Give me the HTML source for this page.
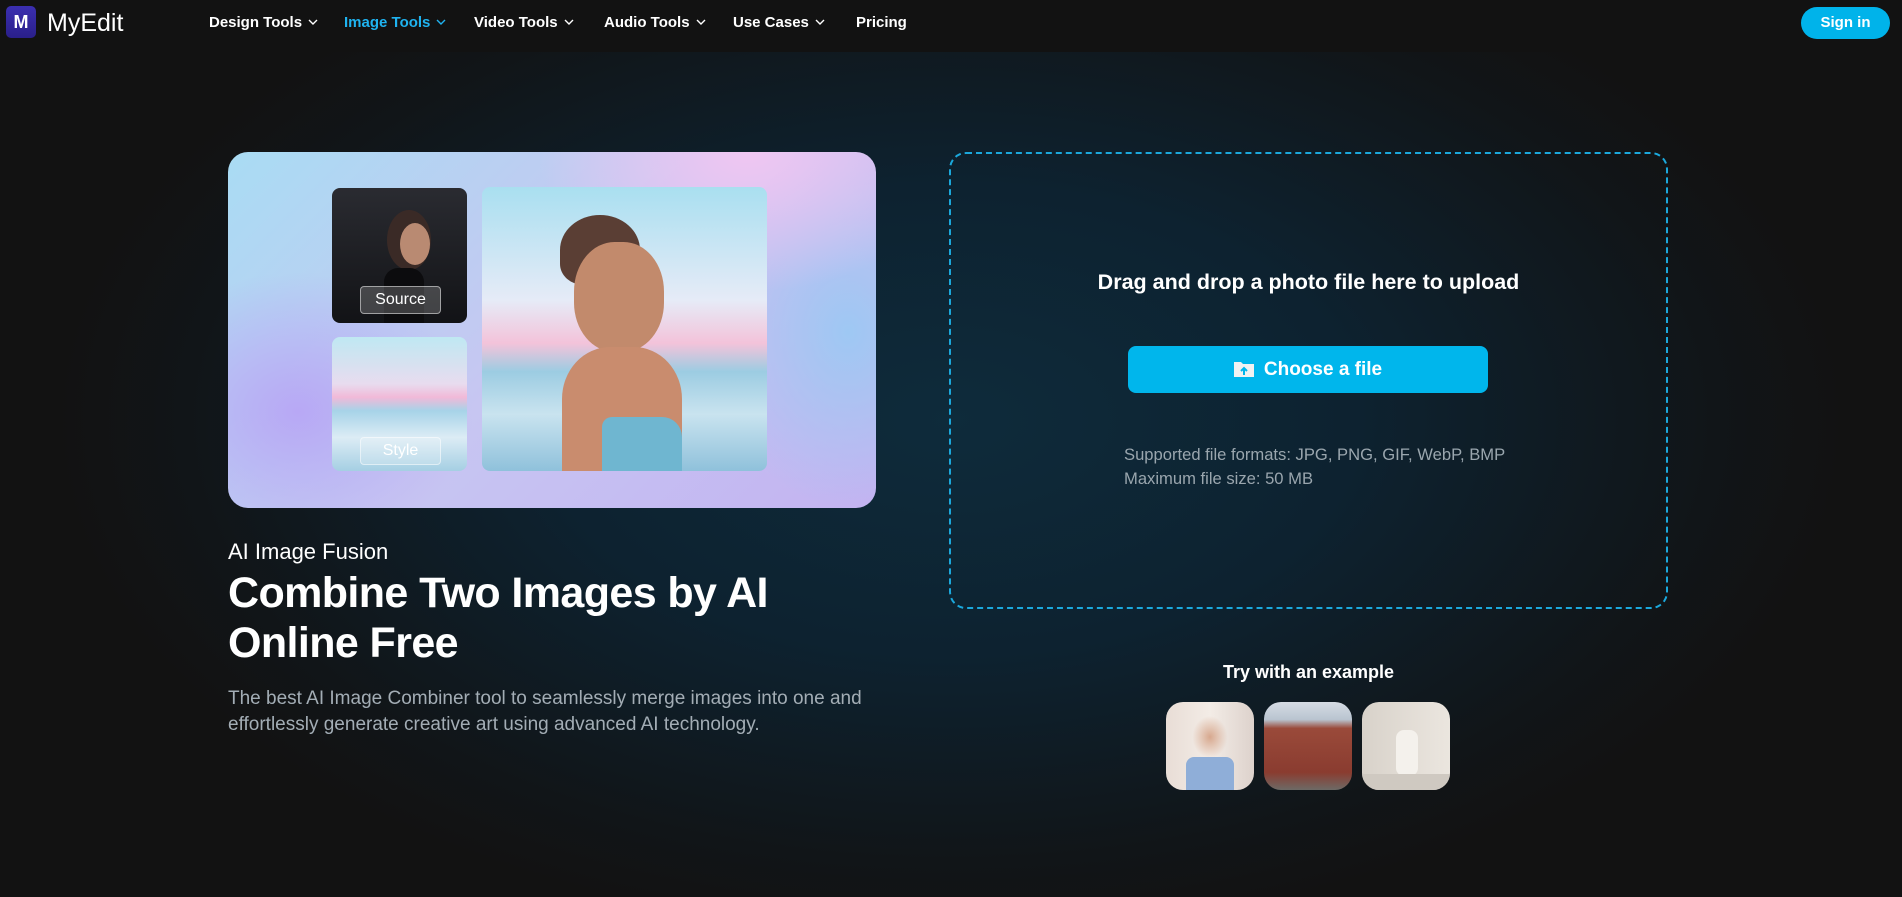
<!DOCTYPE html>
<html><head><meta charset="utf-8"><style>
*{margin:0;padding:0;box-sizing:border-box}
body{width:1902px;height:897px;overflow:hidden;font-family:"Liberation Sans",sans-serif;color:#fff;
background:radial-gradient(ellipse 900px 520px at 951px 420px,#0e2b3b 0%,#0d2230 45%,#111518 85%,#121212 100%);position:relative}
.nav{position:absolute;left:0;top:0;width:1902px;height:52px;background:#121212}
.logo{position:absolute;left:6px;top:6px;width:30px;height:32px;border-radius:5px;background:linear-gradient(#3b2fb0,#2a1f8a);color:#fff;font-weight:bold;font-size:18px;text-align:center;line-height:32px}
.brand{position:absolute;left:47px;top:9px;font-size:25px;color:#fff}
.ni{position:absolute;top:14px;font-size:15px;font-weight:bold;color:#fff}
.ni svg{margin-left:6px;vertical-align:2px}
.sign{position:absolute;left:1801px;top:7px;width:89px;height:32px;border-radius:16px;background:#00b3ea;font-size:15px;font-weight:bold;text-align:center;line-height:32px}
.card{position:absolute;left:228px;top:152px;width:648px;height:356px;border-radius:20px;
background:radial-gradient(ellipse 300px 200px at 520px 0,#f0c6f2 0%,transparent 70%),radial-gradient(ellipse 250px 200px at 70px 260px,#b8a8f5,transparent 70%),radial-gradient(ellipse 200px 250px at 620px 180px,#9ec8f3,transparent 70%),linear-gradient(135deg,#a9dcf3,#c7c6f2 50%,#c3b3f1)}
.t{position:absolute;border-radius:8px;overflow:hidden}
.lab{position:absolute;left:28px;width:81px;height:28px;border:1px solid rgba(255,255,255,.5);border-radius:4px;background:rgba(255,255,255,.2);font-size:16px;text-align:center;line-height:26px}
.h1{position:absolute;left:228px;top:539px;font-size:22px}
.h2{position:absolute;left:228px;top:568px;font-size:43px;font-weight:bold;line-height:50px;letter-spacing:-.6px}
.p{position:absolute;left:228px;top:686px;font-size:19px;line-height:26px;color:#a3adb5}
.drop{position:absolute;left:949px;top:152px;width:719px;height:457px;border:2px dashed #1ba8dc;border-radius:17px}
.dt{position:absolute;left:949px;width:719px;text-align:center;top:270px;font-size:21.5px;font-weight:bold}
.btn{position:absolute;left:1128px;top:346px;width:360px;height:47px;border-radius:8px;background:#00b6ec;text-align:center;font-size:19px;font-weight:bold;line-height:47px}
.sup{position:absolute;left:1124px;top:443px;font-size:16.6px;line-height:24px;color:#9aa6ae}
.try{position:absolute;left:949px;width:719px;text-align:center;top:662px;font-size:18px;font-weight:bold}
.th{position:absolute;top:702px;width:88px;height:88px;border-radius:17px;overflow:hidden}
</style></head><body>
<div class="nav">
<div class="logo">M</div><div class="brand">MyEdit</div>
<div class="ni" style="left:209px">Design Tools<svg width="10" height="6"><path d="M1 1l4 4 4-4" stroke="#fff" fill="none" stroke-width="1.4"/></svg></div>
<div class="ni" style="left:344px;color:#1fb3f0">Image Tools<svg width="10" height="6"><path d="M1 1l4 4 4-4" stroke="#1fb3f0" fill="none" stroke-width="1.4"/></svg></div>
<div class="ni" style="left:474px">Video Tools<svg width="10" height="6"><path d="M1 1l4 4 4-4" stroke="#fff" fill="none" stroke-width="1.4"/></svg></div>
<div class="ni" style="left:604px">Audio Tools<svg width="10" height="6"><path d="M1 1l4 4 4-4" stroke="#fff" fill="none" stroke-width="1.4"/></svg></div>
<div class="ni" style="left:733px">Use Cases<svg width="10" height="6"><path d="M1 1l4 4 4-4" stroke="#fff" fill="none" stroke-width="1.4"/></svg></div>
<div class="ni" style="left:856px">Pricing</div>
<div class="sign">Sign in</div>
</div>
<div class="card"></div>
<div class="t" style="left:332px;top:188px;width:135px;height:135px;background:linear-gradient(#2a2b31,#121316)">
<div style="position:absolute;left:55px;top:22px;width:44px;height:60px;border-radius:50%;background:#3a2a26"></div>
<div style="position:absolute;left:68px;top:35px;width:30px;height:42px;border-radius:50%;background:#b98a72"></div>
<div style="position:absolute;left:52px;top:80px;width:40px;height:60px;border-radius:14px 14px 0 0;background:#0c0c0e"></div>
<div class="lab" style="top:98px">Source</div></div>
<div class="t" style="left:332px;top:337px;width:135px;height:134px;background:linear-gradient(#bfe8f2 0%,#e8dcef 35%,#f1b9d8 45%,#a7d3e8 55%,#dcecf5 75%,#a5cfe3)">
<div class="lab" style="top:100px">Style</div></div>
<div class="t" style="left:482px;top:187px;width:285px;height:284px;background:linear-gradient(#a9dff0 0%,#e6ebf7 40%,#f3c3da 55%,#9ccce2 65%,#c9e3ef 80%,#8fc1db)">
<div style="position:absolute;left:78px;top:28px;width:80px;height:70px;border-radius:50% 50% 30% 30%;background:#5a3e34"></div>
<div style="position:absolute;left:92px;top:55px;width:90px;height:110px;border-radius:45%;background:#c28a6c"></div>
<div style="position:absolute;left:80px;top:160px;width:120px;height:130px;border-radius:40% 40% 0 0;background:#c98c6e"></div>
<div style="position:absolute;left:120px;top:230px;width:80px;height:60px;background:#6fb6d0;border-radius:10px 20px 0 0"></div>
</div>
<div class="h1">AI Image Fusion</div>
<div class="h2">Combine Two Images by AI<br>Online Free</div>
<div class="p">The best AI Image Combiner tool to seamlessly merge images into one and<br>effortlessly generate creative art using advanced AI technology.</div>
<div class="drop"></div>
<div class="dt">Drag and drop a photo file here to upload</div>
<div class="btn"><svg width="20" height="16" style="vertical-align:-2px;margin-right:10px"><path d="M0 1h7l2 2h11v13H0z" fill="#f2f2f2"/><path d="M10 14V7M7 10l3-3 3 3" stroke="#00b6ec" stroke-width="2" fill="none"/></svg>Choose a file</div>
<div class="sup">Supported file formats: JPG, PNG, GIF, WebP, BMP<br>Maximum file size: 50 MB</div>
<div class="try">Try with an example</div>
<div class="th" style="left:1166px;background:radial-gradient(ellipse 25px 30px at 44px 35px,#d7a88e,transparent 70%),linear-gradient(90deg,#e8ddd6,#f3ece6 50%,#ddd2cc);"><div style="position:absolute;left:20px;top:55px;width:48px;height:40px;background:#8faed8;border-radius:8px"></div></div>
<div class="th" style="left:1264px;background:linear-gradient(#d6dce4 0%,#b9c4d0 20%,#9a4a3a 30%,#8a3c30 80%,#6d6a66)"></div>
<div class="th" style="left:1362px;background:linear-gradient(90deg,#d8d2ca,#ebe6df);"><div style="position:absolute;left:34px;top:28px;width:22px;height:46px;border-radius:8px;background:#f4f1ec"></div><div style="position:absolute;left:0;top:72px;width:88px;height:16px;background:#cfc9c1"></div></div>
</body></html>
